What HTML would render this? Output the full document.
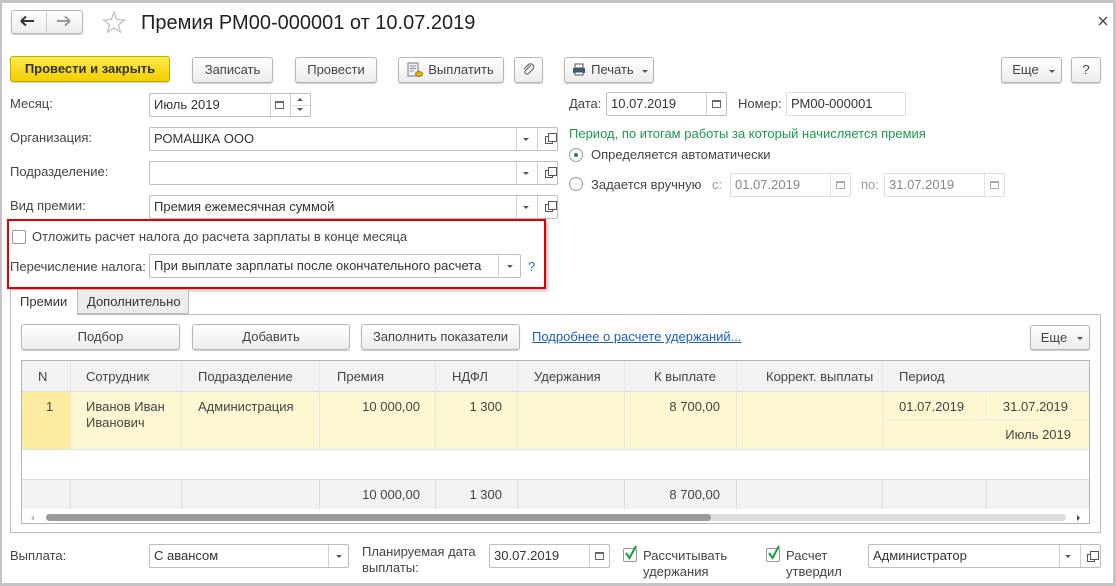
<!DOCTYPE html>
<html><head><meta charset="utf-8"><style>
*{box-sizing:border-box;margin:0;padding:0}
body{width:1116px;height:586px;overflow:hidden;background:#fff;font-family:"Liberation Sans",Arial,sans-serif;font-size:13px;color:#333;position:relative}
.a{position:absolute}
.frame{left:0;top:0;width:1116px;height:586px;border:3px solid #c4c4c4;border-left-width:2px}
.btn{position:absolute;height:26px;border:1px solid #b5b5b5;border-radius:3px;background:linear-gradient(#fff,#ececec);box-shadow:0 1px 1px rgba(0,0,0,.2);text-align:center;line-height:24px;color:#444;white-space:nowrap}
.fld{position:absolute;height:24px;border:1px solid #bdbdbd;border-radius:2px;background:#fff;line-height:22px;padding-left:4px;color:#333;white-space:nowrap;overflow:hidden}
.dv{position:absolute;top:0;bottom:0;border-left:1px solid #d0d0d0}
.lbl{position:absolute;color:#444;white-space:nowrap;line-height:16px}
.arr{position:absolute;width:0;height:0;border-left:3px solid transparent;border-right:3px solid transparent;border-top:3px solid #555}
.cal{position:absolute;width:9px;height:8px;border:1px solid #666;border-top-width:2px}
.open{position:absolute;width:8px;height:8px;border:1px solid #555}
.open:after{content:"";position:absolute;left:2px;top:-4px;width:7px;height:7px;border:1px solid #555;background:#fff}
.cb{position:absolute;width:14px;height:14px;border:1px solid #999;border-radius:2px;background:#fff}
.rad{position:absolute;width:14px;height:14px;border:1px solid #999;border-radius:50%;background:#fff}
.tbl div{position:absolute}
.c{color:#444;white-space:nowrap;line-height:16px}
.vl{position:absolute;width:1px;background:#ddd}
</style></head><body>
<div class="a frame"></div>

<div class="btn" style="left:11px;top:10px;width:72px;height:24px"></div>
<div class="a" style="left:46px;top:12px;width:1px;height:20px;background:#ccc"></div>
<svg class="a" style="left:20px;top:15px" width="16" height="12"><path d="M1 6H14M1 6L6 1.5M1 6L6 10.5" stroke="#333" stroke-width="2" fill="none"/></svg>
<svg class="a" style="left:56px;top:15px" width="16" height="12"><path d="M1 6H14M14 6L9 1.5M14 6L9 10.5" stroke="#999" stroke-width="2" fill="none"/></svg>
<svg class="a" style="left:102px;top:11px" width="24" height="23"><path d="M12 1.5L14.8 8.6L22.4 9L16.5 13.8L18.5 21.2L12 17L5.5 21.2L7.5 13.8L1.6 9L9.2 8.6Z" fill="none" stroke="#bbb" stroke-width="1.2"/></svg>
<div class="a" style="left:141px;top:10px;font-size:20px;color:#222;line-height:26px">Премия РМ00-000001 от 10.07.2019</div>
<svg class="a" style="left:1098px;top:16px" width="10" height="10"><path d="M1 1L9 9M9 1L1 9" stroke="#444" stroke-width="1.3"/></svg>

<div class="btn" style="left:10px;top:56px;width:160px;background:linear-gradient(#ffe94d,#f2cf00);border-color:#c9a800;font-weight:bold;color:#333">Провести и закрыть</div>
<div class="btn" style="left:192px;top:57px;width:81px">Записать</div>
<div class="btn" style="left:295px;top:57px;width:82px">Провести</div>
<div class="btn" style="left:398px;top:57px;width:106px;padding-left:20px">Выплатить</div>
<svg class="a" style="left:407px;top:62px" width="16" height="16"><rect x="1" y="1" width="10" height="13" fill="#eef" stroke="#778"/><path d="M3 4H9M3 6.5H9M3 9H7" stroke="#889"/><ellipse cx="12" cy="12" rx="3.5" ry="2.5" fill="#e8b400" stroke="#a07800"/></svg>
<div class="btn" style="left:514px;top:57px;width:29px"></div>
<svg class="a" style="left:521px;top:62px" width="15" height="15"><path d="M10 3L4.5 8.5a2 2 0 0 0 3 3L12 7a3.2 3.2 0 0 0-4.5-4.5L3 7" fill="none" stroke="#666" stroke-width="1.2"/></svg>
<div class="btn" style="left:564px;top:57px;width:90px;padding-left:14px">Печать &nbsp;</div>
<svg class="a" style="left:572px;top:63px" width="14" height="13"><rect x="3" y="1" width="8" height="4" fill="#fff" stroke="#456"/><rect x="1" y="5" width="12" height="5" fill="#3a5a7a"/><rect x="3" y="9" width="8" height="3" fill="#fff" stroke="#456"/></svg>
<div class="arr" style="left:642px;top:70px"></div>
<div class="btn" style="left:1001px;top:57px;width:61px;padding-right:12px">Еще</div>
<div class="arr" style="left:1049px;top:70px"></div>
<div class="btn" style="left:1071px;top:57px;width:30px">?</div>

<div class="lbl" style="left:10px;top:96px">Месяц:</div>
<div class="fld" style="left:149px;top:93px;width:162px">Июль 2019<div class="dv" style="left:120px"></div><div class="dv" style="left:140px"></div></div>
<div class="cal" style="left:275px;top:101px"></div>
<div class="arr" style="left:297px;top:98px;transform:rotate(180deg)"></div>
<div class="arr" style="left:297px;top:108px"></div>
<div class="a" style="left:291px;top:105px;width:19px;height:1px;background:#ddd"></div>

<div class="lbl" style="left:10px;top:130px">Организация:</div>
<div class="fld" style="left:149px;top:127px;width:409px">РОМАШКА ООО<div class="dv" style="left:366px"></div><div class="dv" style="left:387px"></div></div>
<div class="arr" style="left:523px;top:138px"></div><div class="open" style="left:545px;top:136px"></div>
<div class="lbl" style="left:10px;top:164px">Подразделение:</div>
<div class="fld" style="left:149px;top:161px;width:409px"><div class="dv" style="left:366px"></div><div class="dv" style="left:387px"></div></div>
<div class="arr" style="left:523px;top:172px"></div><div class="open" style="left:545px;top:170px"></div>
<div class="lbl" style="left:10px;top:198px">Вид премии:</div>
<div class="fld" style="left:149px;top:195px;width:409px">Премия ежемесячная суммой<div class="dv" style="left:366px"></div><div class="dv" style="left:387px"></div></div>
<div class="arr" style="left:523px;top:206px"></div><div class="open" style="left:545px;top:204px"></div>

<div class="a" style="left:7px;top:219px;width:539px;height:70px;border:2px solid #e00000;box-shadow:2px 2px 3px rgba(0,0,0,.25)"></div>
<div class="cb" style="left:12px;top:230px"></div>
<div class="lbl" style="left:32px;top:229px">Отложить расчет налога до расчета зарплаты в конце месяца</div>
<div class="lbl" style="left:10px;top:259px">Перечисление налога:</div>
<div class="fld" style="left:149px;top:254px;width:372px">При выплате зарплаты после окончательного расчета<div class="dv" style="left:348px"></div></div>
<div class="arr" style="left:507px;top:265px"></div>
<div class="lbl" style="left:528px;top:259px;color:#1a70c0">?</div>

<div class="lbl" style="left:569px;top:96px">Дата:</div>
<div class="fld" style="left:606px;top:92px;width:121px">10.07.2019<div class="dv" style="left:99px"></div></div>
<div class="cal" style="left:712px;top:100px"></div>
<div class="lbl" style="left:738px;top:96px">Номер:</div>
<div class="fld" style="left:786px;top:92px;width:120px;border-color:#ddd">РМ00-000001</div>
<div class="lbl" style="left:569px;top:126px;color:#1a9a4a">Период, по итогам работы за который начисляется премия</div>
<div class="rad" style="left:569px;top:148px"></div><div class="a" style="left:574px;top:153px;width:4px;height:4px;border-radius:50%;background:#1a8a40"></div>
<div class="lbl" style="left:591px;top:147px">Определяется автоматически</div>
<div class="rad" style="left:569px;top:177px"></div>
<div class="lbl" style="left:591px;top:177px">Задается вручную</div>
<div class="lbl" style="left:712px;top:177px;color:#999">с:</div>
<div class="fld" style="left:730px;top:173px;width:121px;border-color:#ddd;color:#888">01.07.2019<div class="dv" style="left:99px;border-color:#e3e3e3"></div></div>
<div class="cal" style="left:836px;top:181px;border-color:#aaa"></div>
<div class="lbl" style="left:861px;top:177px;color:#999">по:</div>
<div class="fld" style="left:884px;top:173px;width:121px;border-color:#ddd;color:#888">31.07.2019<div class="dv" style="left:99px;border-color:#e3e3e3"></div></div>
<div class="cal" style="left:990px;top:181px;border-color:#aaa"></div>

<div class="a" style="left:10px;top:314px;width:1091px;height:219px;border:1px solid #bbb"></div>
<div class="a" style="left:10px;top:289px;width:68px;height:26px;border:1px solid #bbb;border-bottom:none;background:#fff;line-height:24px;padding-left:9px;color:#333">Премии</div>
<div class="a" style="left:78px;top:289px;width:111px;height:25px;border:1px solid #bbb;border-left:none;background:#ececec;line-height:24px;padding-left:9px;color:#333">Дополнительно</div>

<div class="btn" style="left:21px;top:324px;width:159px">Подбор</div>
<div class="btn" style="left:192px;top:324px;width:158px">Добавить</div>
<div class="btn" style="left:361px;top:324px;width:159px">Заполнить показатели</div>
<div class="lbl" style="left:532px;top:329px;color:#1a5fb4;text-decoration:underline">Подробнее о расчете удержаний...</div>
<div class="btn" style="left:1030px;top:325px;width:60px;height:25px;padding-right:12px">Еще</div>
<div class="arr" style="left:1077px;top:337px"></div>

<div class="a tbl" style="left:21px;top:360px;width:1069px;height:164px;border:1px solid #b5b5b5;background:#fff;overflow:hidden">
<div style="left:0;top:0;width:1069px;height:31px;background:#f2f2f2;border-bottom:1px solid #ddd"></div>
<div style="left:0;top:31px;width:1069px;height:57px;background:#fdf7d2"></div>
<div style="left:0;top:31px;width:48px;height:57px;background:#fbeca0"></div>
<div style="left:0;top:88px;width:1069px;height:1px;background:#e3e3e3"></div>
<div style="left:0;top:118px;width:1069px;height:30px;background:#f2f2f2;border-top:1px solid #ddd"></div>
<div class="vl" style="left:48px;top:0;height:88px;background:#e6e6e6"></div>
<div class="vl" style="left:159px;top:0;height:88px;background:#e6e6e6"></div>
<div class="vl" style="left:297px;top:0;height:88px;background:#e6e6e6"></div>
<div class="vl" style="left:413px;top:0;height:88px;background:#e6e6e6"></div>
<div class="vl" style="left:495px;top:0;height:88px;background:#e6e6e6"></div>
<div class="vl" style="left:602px;top:0;height:88px;background:#e6e6e6"></div>
<div class="vl" style="left:714px;top:0;height:88px;background:#e6e6e6"></div>
<div class="vl" style="left:860px;top:0;height:88px;background:#e6e6e6"></div>
<div class="vl" style="left:964px;top:31px;height:28px;background:#eee"></div>
<div style="left:860px;top:58px;width:209px;height:1px;background:#eee"></div>
<div class="vl" style="left:48px;top:118px;height:30px"></div>
<div class="vl" style="left:159px;top:118px;height:30px"></div>
<div class="vl" style="left:297px;top:118px;height:30px"></div>
<div class="vl" style="left:413px;top:118px;height:30px"></div>
<div class="vl" style="left:495px;top:118px;height:30px"></div>
<div class="vl" style="left:602px;top:118px;height:30px"></div>
<div class="vl" style="left:714px;top:118px;height:30px"></div>
<div class="vl" style="left:860px;top:118px;height:30px"></div>
<div class="vl" style="left:964px;top:118px;height:30px"></div>
<div class="c" style="left:16px;top:8px">N</div>
<div class="c" style="left:64px;top:8px">Сотрудник</div>
<div class="c" style="left:176px;top:8px">Подразделение</div>
<div class="c" style="left:315px;top:8px">Премия</div>
<div class="c" style="left:430px;top:8px">НДФЛ</div>
<div class="c" style="left:512px;top:8px">Удержания</div>
<div class="c" style="left:632px;top:8px">К выплате</div>
<div class="c" style="left:744px;top:8px">Коррект. выплаты</div>
<div class="c" style="left:877px;top:8px">Период</div>
<div class="c" style="left:24px;top:38px">1</div>
<div class="c" style="left:64px;top:38px;line-height:16px">Иванов Иван<br>Иванович</div>
<div class="c" style="left:176px;top:38px">Администрация</div>
<div class="c" style="left:297px;width:101px;text-align:right;top:38px">10 000,00</div>
<div class="c" style="left:413px;width:67px;text-align:right;top:38px">1 300</div>
<div class="c" style="left:602px;width:96px;text-align:right;top:38px">8 700,00</div>
<div class="c" style="left:877px;top:38px">01.07.2019</div>
<div class="c" style="left:964px;width:82px;text-align:right;top:38px">31.07.2019</div>
<div class="c" style="left:860px;width:189px;text-align:right;top:66px">Июль 2019</div>
<div class="c" style="left:297px;width:101px;text-align:right;top:126px">10 000,00</div>
<div class="c" style="left:413px;width:67px;text-align:right;top:126px">1 300</div>
<div class="c" style="left:602px;width:96px;text-align:right;top:126px">8 700,00</div>
<div style="left:24px;top:153px;width:1020px;height:7px;border-radius:4px;background:#ddd"></div>
<div style="left:24px;top:153px;width:665px;height:7px;border-radius:4px;background:#9a9a9a"></div>
<div style="left:9px;top:154px;width:0;height:0;border-top:3px solid transparent;border-bottom:3px solid transparent;border-right:3px solid #bbb"></div>
<div style="left:1055px;top:154px;width:0;height:0;border-top:3px solid transparent;border-bottom:3px solid transparent;border-left:3px solid #444"></div>
</div>

<div class="lbl" style="left:10px;top:548px">Выплата:</div>
<div class="fld" style="left:149px;top:544px;width:200px">С авансом<div class="dv" style="left:178px"></div></div>
<div class="arr" style="left:336px;top:555px"></div>
<div class="lbl" style="left:362px;top:544px">Планируемая дата<br>выплаты:</div>
<div class="fld" style="left:489px;top:544px;width:121px">30.07.2019<div class="dv" style="left:99px"></div></div>
<div class="cal" style="left:595px;top:552px"></div>
<div class="cb" style="left:623px;top:548px"></div>
<svg class="a" style="left:624px;top:545px" width="14" height="16"><path d="M2 8L5.5 13L12 1" stroke="#1a9a3a" stroke-width="2" fill="none"/></svg>
<div class="lbl" style="left:643px;top:548px">Рассчитывать<br>удержания</div>
<div class="cb" style="left:766px;top:548px"></div>
<svg class="a" style="left:767px;top:545px" width="14" height="16"><path d="M2 8L5.5 13L12 1" stroke="#1a9a3a" stroke-width="2" fill="none"/></svg>
<div class="lbl" style="left:786px;top:548px">Расчет<br>утвердил</div>
<div class="fld" style="left:868px;top:544px;width:233px">Администратор<div class="dv" style="left:190px"></div><div class="dv" style="left:211px"></div></div>
<div class="arr" style="left:1065px;top:555px"></div><div class="open" style="left:1087px;top:554px"></div>
</body></html>
